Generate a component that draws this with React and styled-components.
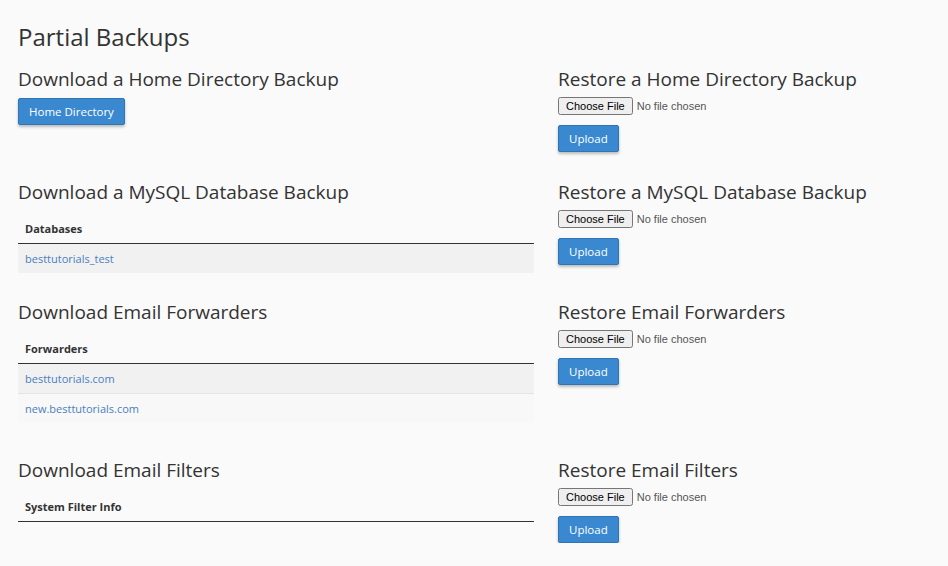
import React from "react";
import styled, { createGlobalStyle } from "styled-components";

const Global = createGlobalStyle`
  body { margin: 0; background: #fafafa; font-family: "Open Sans", sans-serif; color: #333; }
`;
const Page = styled.div`padding: 20px 18px 0 18px;`;
const Title = styled.h1`font-size: 24px; font-weight: 400; margin: 0 0 12px; line-height: 34px;`;
const Grid = styled.div`
  display: grid; grid-template-columns: 516px 1fr; column-gap: 24px;
  grid-template-rows: 113px 120px 158px auto;
`;
const Section = styled.div`display: flex; flex-direction: column; align-items: flex-start;`;
const H2 = styled.h2`font-size: 19px; font-weight: 400; margin: 0 0 4px; line-height: 26px;`;
const Btn = styled.button`
  background: #3a89d0; color: #fff; border: 1px solid #2f74b3; border-radius: 2px;
  font-family: "Open Sans", sans-serif; font-size: 11.5px; padding: 0 10px; height: 27px;
  box-shadow: 0 2px 3px rgba(0,0,0,0.25); margin-top: ${p => p.$mt || 0}px;
`;
const FileInput = styled.input`font-family: "Liberation Sans", Arial, sans-serif; font-size: 11px; color: #555; margin-top: 1px;`;
const Table = styled.div`width: 100%; font-size: 11px;`;
const Th = styled.div`font-weight: 700; padding: 8px 7px 7px; border-bottom: 1px solid #333; margin-top: 4px;`;
const Row = styled.div`
  padding: 0 7px; height: 29px; display: flex; align-items: center;
  background: ${p => (p.$odd ? "#f1f1f1" : "#f8f8f8")}; border-top: ${p => (p.$odd ? "none" : "1px solid #e4e4e4")};
  color: #4a7fc0; font-size: 11px;
`;

const Restore = ({ title }) => (
  <Section>
    <H2>{title}</H2>
    <FileInput type="file" />
    <Btn $mt={10}>Upload</Btn>
  </Section>
);

export default function App() {
  return (
    <Page>
      <Global />
      <Title>Partial Backups</Title>
      <Grid>
        <Section>
          <H2>Download a Home Directory Backup</H2>
          <Btn $mt={2}>Home Directory</Btn>
        </Section>
        <Restore title="Restore a Home Directory Backup" />
        <Section>
          <H2>Download a MySQL Database Backup</H2>
          <Table>
            <Th>Databases</Th>
            <Row $odd>besttutorials_test</Row>
          </Table>
        </Section>
        <Restore title="Restore a MySQL Database Backup" />
        <Section>
          <H2>Download Email Forwarders</H2>
          <Table>
            <Th>Forwarders</Th>
            <Row $odd>besttutorials.com</Row>
            <Row>new.besttutorials.com</Row>
          </Table>
        </Section>
        <Restore title="Restore Email Forwarders" />
        <Section>
          <H2>Download Email Filters</H2>
          <Table>
            <Th>System Filter Info</Th>
          </Table>
        </Section>
        <Restore title="Restore Email Filters" />
      </Grid>
    </Page>
  );
}
